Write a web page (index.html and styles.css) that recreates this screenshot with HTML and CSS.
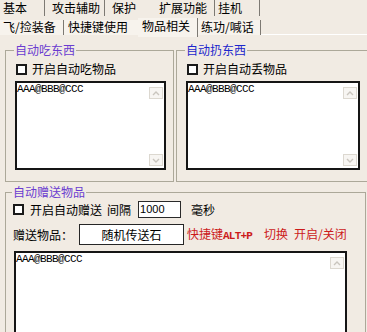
FILE: index.html
```html
<!DOCTYPE html>
<html lang="zh-CN">
<head>
    <meta charset="UTF-8">
    <meta name="viewport" content="width=device-width, initial-scale=1.0">
    <title>物品相关</title>
    <link rel="stylesheet" href="styles.css">
</head>
<body>
    <div class="window">
        <div class="tabs">
            <div class="tab-row row-back">
                <span class="tab sep tab-basic">基本</span>
                <span class="tab sep tab-attack">攻击辅助</span>
                <span class="tab tab-guard">保护</span>
                <span class="tab sep tab-ext">扩展功能</span>
                <span class="tab sep tab-idle">挂机</span>
            </div>
            <div class="tab-row row-front">
                <span class="tab sep tab-fly">飞/捡装备</span>
                <span class="tab tab-keys">快捷键使用</span>
                <span class="tab sep tab-items active">物品相关</span>
                <span class="tab sep tab-train">练功/喊话</span>
                <span class="tab-fill"></span>
            </div>
        </div>

        <div class="group-row">
            <fieldset class="group group-eat">
                <legend class="purple">自动吃东西</legend>
                <label class="check"><span class="box"></span>开启自动吃物品</label>
                <div class="memo">
                    <div class="memo-text">AAA@BBB@CCC</div>
                    <div class="scroll">
                        <span class="arrow"><svg width="8" height="5" viewBox="0 0 8 5"><polyline points="1,4 4,1 7,4" /></svg></span>
                        <span class="arrow"><svg width="8" height="5" viewBox="0 0 8 5"><polyline points="1,1 4,4 7,1" /></svg></span>
                    </div>
                </div>
            </fieldset>

            <fieldset class="group group-drop">
                <legend class="blue">自动扔东西</legend>
                <label class="check"><span class="box"></span>开启自动丢物品</label>
                <div class="memo">
                    <div class="memo-text">AAA@BBB@CCC</div>
                    <div class="scroll">
                        <span class="arrow"><svg width="8" height="5" viewBox="0 0 8 5"><polyline points="1,4 4,1 7,4" /></svg></span>
                        <span class="arrow"><svg width="8" height="5" viewBox="0 0 8 5"><polyline points="1,1 4,4 7,1" /></svg></span>
                    </div>
                </div>
            </fieldset>
        </div>

        <fieldset class="group group-give">
            <legend class="purple">自动赠送物品</legend>
            <div class="give-row">
                <span class="box"></span>
                <span>开启自动赠送</span>
                <span class="gap-label">间隔</span>
                <span class="num">1000</span>
                <span class="unit">毫秒</span>
            </div>
            <div class="give-row row-item">
                <span>赠送物品：</span>
                <span class="item-box">随机传送石</span>
                <span class="hot">快捷键<span class="key">ALT+P</span><span class="hot-switch">切换</span><span class="hot-state">开启/关闭</span></span>
            </div>
            <div class="memo memo-give">
                <div class="memo-text">AAA@BBB@CCC</div>
                <div class="scroll">
                    <span class="arrow"><svg width="8" height="5" viewBox="0 0 8 5"><polyline points="1,4 4,1 7,4" /></svg></span>
                </div>
            </div>
        </fieldset>
    </div>
</body>
</html>
```

FILE: styles.css
```css
* {
    box-sizing: border-box;
}

body {
    margin: 0;
    overflow: hidden;
    background-color: #f1ebe3;
    font-family: "Noto Sans CJK SC", sans-serif;
    font-size: 12px;
    color: #000;
}

.window {
    width: 367px;
    height: 332px;
    overflow: hidden;
}

/* tabs */
.tab-row {
    display: flex;
    height: 17px;
}

.tab {
    flex-shrink: 0;
    height: 16px;
    line-height: 16px;
    white-space: nowrap;
}

.tab.sep {
    border-right: 1px solid #7d7973;
}

.row-front {
    height: 18px;
}

.row-front .tab {
    margin-top: 3px;
    height: 15px;
    line-height: 13px;
    background-color: #f7f3ed;
}

.row-front .tab.active {
    margin-top: 1px;
    height: 19px;
    padding-top: 1px;
    line-height: 13px;
}

.tab-fill {
    flex: 1;
    height: 18px;
    border-bottom: 1px solid #fff;
}

.tab-basic { width: 45px; padding-left: 3px; }
.tab-attack { width: 60px; padding-left: 7px; }
.tab-guard { width: 54px; padding-left: 7px; }
.tab-ext { width: 56px; }
.tab-idle { width: 45px; padding-left: 3px; }
.tab-fly { width: 64px; padding-left: 3px; }
.tab-keys { width: 74px; padding-left: 4px; }
.tab-items { width: 60px; padding-left: 4px; }
.tab-train { width: 63px; padding-left: 3px; }

/* group boxes */
.group-row {
    display: flex;
    gap: 2px;
    margin-top: 8px;
    padding-left: 5px;
}

.group {
    flex-shrink: 0;
    margin: 0;
    min-width: 0;
    padding: 0 7px 11px 9px;
    border: 1px solid #aca899;
}

.group legend {
    margin-left: -1px;
    padding: 0 1px;
    line-height: 14px;
}

.purple {
    color: #6a3cd0;
}

.blue {
    color: #1c26cc;
}

.group-eat {
    width: 169px;
}

.group-drop {
    width: 210px;
}

.check {
    display: flex;
    align-items: center;
    height: 14px;
    margin-top: 5px;
    line-height: 14px;
}

.box {
    flex-shrink: 0;
    width: 11px;
    height: 11px;
    margin: 0 5px 0 1px;
    border: 2px solid #1a1a1a;
    background-color: #fff;
}

.memo {
    display: flex;
    height: 89px;
    margin-top: 5px;
    border: 2px solid #151515;
    background-color: #fff;
}

.group-eat .memo {
    width: 151px;
}

.group-drop .memo {
    width: 174px;
}

.memo-text {
    flex: 1;
    font-family: "Liberation Mono", monospace;
    font-size: 11px;
    letter-spacing: -0.6px;
    line-height: 13px;
}

.scroll {
    display: flex;
    flex-direction: column;
    justify-content: space-between;
    width: 16px;
    padding: 4px 1px 2px;
}

.arrow {
    display: flex;
    align-items: center;
    justify-content: center;
    height: 12px;
    border: 1px solid #dcd8d0;
    background-color: #f7f5f2;
}

.arrow polyline {
    fill: none;
    stroke: #c9c5be;
    stroke-width: 1.4;
}

/* give items */
.group-give {
    width: 361px;
    margin: 3px 0 0 5px;
    padding: 0 7px;
}

.give-row {
    display: flex;
    align-items: center;
    height: 17px;
    margin-top: 2px;
    line-height: 14px;
    white-space: nowrap;
}

.give-row .box {
    margin: 0 6px 0 0;
}

.gap-label {
    margin-left: 5px;
}

.num {
    width: 43px;
    height: 17px;
    margin-left: 7px;
    padding-left: 1px;
    border: 1px solid #2a2a2a;
    background-color: #fff;
    font-family: "Liberation Sans", sans-serif;
    font-size: 11px;
    line-height: 15px;
}

.unit {
    margin-left: 10px;
}

.row-item {
    height: 21px;
    margin-top: 6px;
}

.item-box {
    width: 105px;
    height: 21px;
    margin-left: 6px;
    border: 1px solid #262626;
    background-color: #fff;
    text-align: center;
    line-height: 19px;
}

.hot {
    margin-left: 3px;
    color: #cc1a1a;
}

.key {
    font-family: "Liberation Mono", monospace;
    font-size: 11px;
    font-weight: bold;
    letter-spacing: -0.8px;
}

.hot-switch {
    margin-left: 12px;
}

.hot-state {
    margin-left: 6px;
}

.memo-give {
    width: 333px;
    height: 100px;
    margin: 6px 0 0 1px;
}
```
